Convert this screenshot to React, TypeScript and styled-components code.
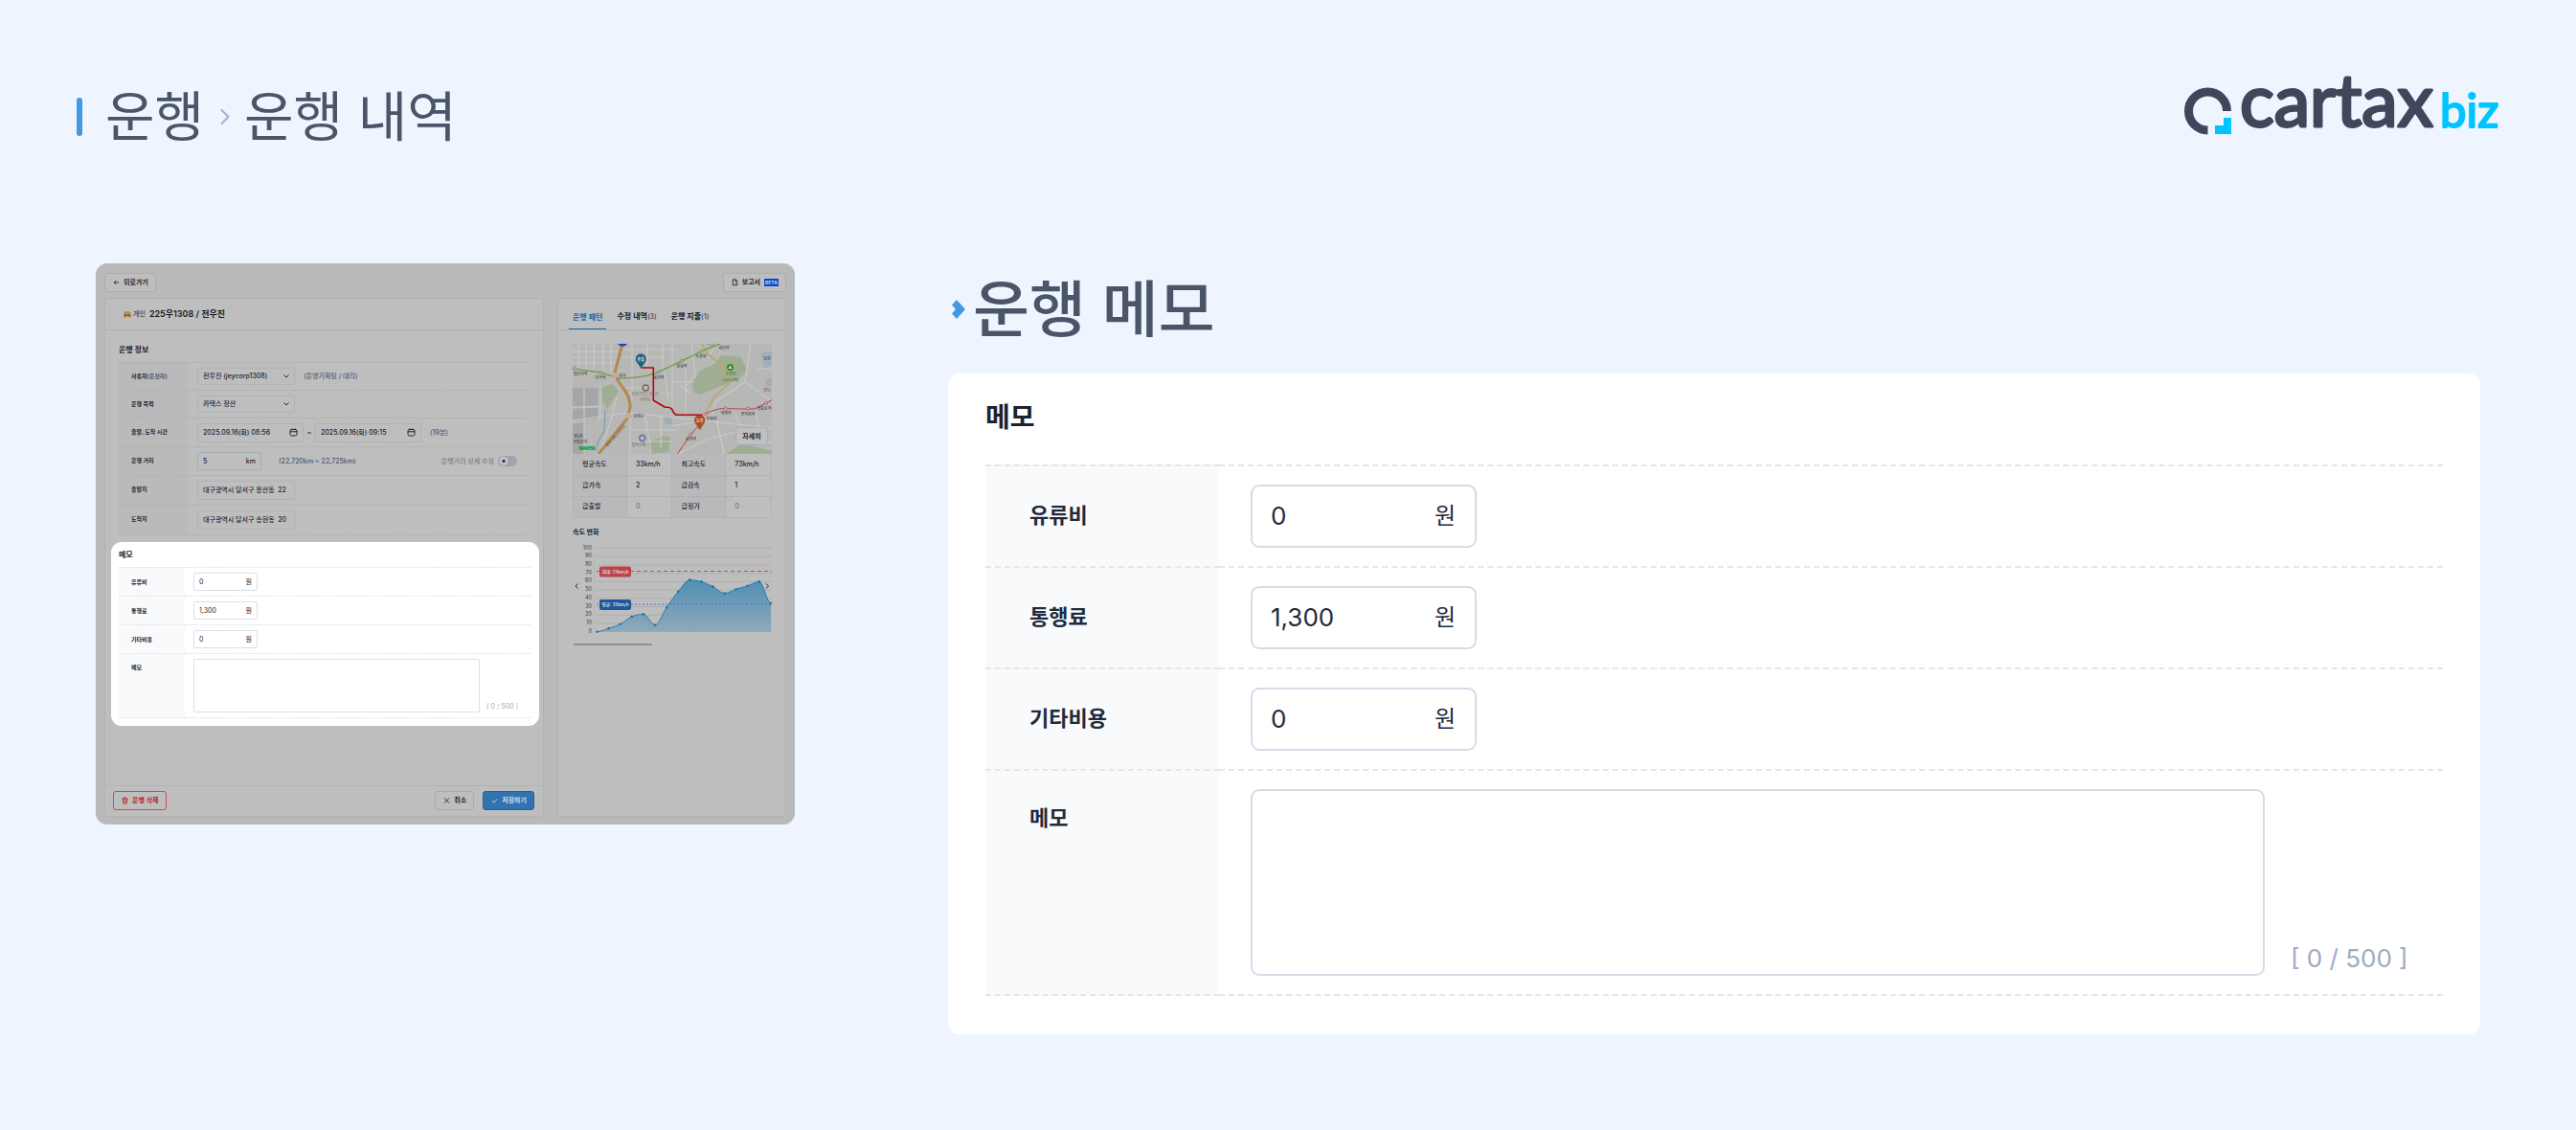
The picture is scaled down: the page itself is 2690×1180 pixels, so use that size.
import React, { useId } from 'react';
import styled, { createGlobalStyle, css } from 'styled-components';

const GlobalStyle = createGlobalStyle`
  *, *::before, *::after { box-sizing: border-box; }
  body {
    margin: 0;
    background: #eef5ff;
    color: #1f2a3d;
    font-family: Inter, "Noto Sans CJK KR", sans-serif;
  }
  button, input, select, textarea { font: inherit; color: inherit; margin: 0; }
`;

/* ---------- page frame ---------- */

const Page = styled.div`
  min-height: 100vh;
`;

const Header = styled.header`
  display: flex;
  align-items: flex-start;
  justify-content: space-between;
  padding: 80px 80px 0;
`;

const Crumbs = styled.h1`
  display: flex;
  align-items: center;
  margin: 0;
  color: #4a5568;
  font-size: 56px;
  font-weight: 400;
  line-height: 84px;
  &::before {
    content: '';
    width: 6px;
    height: 40px;
    margin-right: 24px;
    border-radius: 3px;
    background: #4299e1;
  }
`;

const CrumbArrow = styled.svg`
  width: 12px;
  height: 18px;
  margin: 0 14px 0 16px;
`;

const Logo = styled.svg`
  width: 329px;
  height: 60px;
  overflow: visible;
`;

const Main = styled.main`
  display: grid;
  grid-template-columns: minmax(0, 730fr) minmax(0, 1600fr);
  align-items: start;
  gap: 160px;
  padding: 111px 100px 100px;
`;

/* ---------- memo form: large card and thumbnail ---------- */

type Sized = { $lg?: boolean };

const FeatureTitle = styled.h2`
  display: flex;
  align-items: center;
  gap: 8px;
  margin: 0 0 19px;
  padding-left: 4px;
  color: #4a5568;
  font-size: 64px;
  font-weight: 500;
  line-height: 96px;
`;

const FeatureMark = styled.svg`
  width: 14px;
  height: 20px;
`;

const MemoCard = styled.section<Sized>`
  background: #fff;
  ${p => p.$lg
    ? css`border-radius: 12px; padding: 28px 39px 40px;`
    : css`border-radius: 11px; margin: 7px 4px 0 6px; padding: 5px 9px 8px 8px;`}
`;

const SectionTitle = styled.h3<Sized>`
  margin: 0;
  color: #1a2233;
  font-weight: 700;
  ${p => p.$lg
    ? css`font-size: 28px; line-height: 36px; margin-bottom: 31px;`
    : css`font-size: 8px; line-height: 16px; margin-bottom: 5px;`}
`;

const MemoRows = styled.div<Sized>`
  display: grid;
  grid-template-columns: ${p => (p.$lg ? '244px' : '69px')} minmax(0, 1fr);
`;

const rule = css<Sized>`
  border-bottom: ${p => (p.$lg ? '2px dashed #e6e6e6' : '1px dotted #d9dbde')};
`;

const MemoLabel = styled.label<Sized & { $top?: boolean; $first?: boolean }>`
  ${rule}
  display: flex;
  align-items: ${p => (p.$top ? 'flex-start' : 'center')};
  background: #f9fafc;
  font-weight: 700;
  ${p => p.$first && (p.$lg
    ? css`border-top: 2px dashed #e6e6e6;`
    : css`border-top: 1px dotted #d9dbde;`)}
  ${p => p.$lg
    ? css`font-size: 22px; line-height: 32px; padding: ${p.$top ? '33px' : '0'} 0 2px 46px;`
    : css`font-size: 6px; line-height: 10px; padding: ${p.$top ? '9px' : '0'} 0 0 13px;`}
`;

const MemoCell = styled.div<Sized & { $first?: boolean }>`
  ${rule}
  display: flex;
  align-items: flex-end;
  ${p => p.$first && (p.$lg
    ? css`border-top: 2px dashed #e6e6e6;`
    : css`border-top: 1px dotted #d9dbde;`)}
  ${p => p.$lg ? css`gap: 27px; padding: 19px 33px;` : css`gap: 7px; padding: 5px 9px;`}
`;

const Amount = styled.span<Sized>`
  display: flex;
  align-items: center;
  background: #fff;
  ${p => p.$lg
    ? css`width: 236px; height: 66px; border: 2px solid #d3dce8; border-radius: 9px; padding: 0 20px 0 19px; font-size: 24px; line-height: 32px;`
    : css`width: 67px; height: 19px; border: 1px solid #d8e0ea; border-radius: 2px; padding: 0 5px; font-size: 7px;`}
`;

const AmountInput = styled.input<Sized>`
  flex: 1;
  min-width: 0;
  padding: 0;
  border: 0;
  outline: 0;
  background: none;
  ${p => p.$lg && css`font-size: 26px;`}
`;

const MemoArea = styled.textarea<Sized>`
  flex: 1;
  min-width: 0;
  resize: none;
  outline: 0;
  background: #fff;
  ${p => p.$lg
    ? css`height: 195px; border: 2px solid #d3dce8; border-radius: 9px; padding: 16px 20px; font-size: 24px;`
    : css`height: 56px; border: 1px solid #d8e0ea; border-radius: 2px; padding: 4px 5px; font-size: 7px;`}
`;

const Counter = styled.span<Sized>`
  color: #9dacc0;
  white-space: nowrap;
  ${p => p.$lg
    ? css`width: 126px; font-size: 26px; line-height: 36px;`
    : css`width: 37px; font-size: 7px; line-height: 12px;`}
`;

const COSTS: [string, string][] = [['유류비', '0'], ['통행료', '1,300'], ['기타비용', '0']];

function Memo({ lg }: { lg?: boolean }) {
  const id = useId();
  return (
    <MemoCard $lg={lg}>
      <SectionTitle $lg={lg}>메모</SectionTitle>
      <MemoRows $lg={lg}>
        {COSTS.map(([name, value], i) => (
          <React.Fragment key={name}>
            <MemoLabel $lg={lg} $first={i === 0} htmlFor={id + name}>{name}</MemoLabel>
            <MemoCell $lg={lg} $first={i === 0}>
              <Amount $lg={lg}>
                <AmountInput $lg={lg} id={id + name} defaultValue={value} />
                원
              </Amount>
            </MemoCell>
          </React.Fragment>
        ))}
        <MemoLabel $lg={lg} $top htmlFor={id + 'memo'}>메모</MemoLabel>
        <MemoCell $lg={lg}>
          <MemoArea $lg={lg} id={id + 'memo'} />
          <Counter $lg={lg}>[ 0 / 500 ]</Counter>
        </MemoCell>
      </MemoRows>
    </MemoCard>
  );
}

/* ---------- dimmed app window ---------- */

const Shot = styled.section`
  padding: 10px 9px 8px;
  border-radius: 12px;
  background: #b9b9b9;
  color: #1c2433;
  font-size: 7px;
  line-height: 12px;
`;

const TopBar = styled.div`
  display: flex;
  justify-content: space-between;
  margin-bottom: 6px;
`;

const tones = {
  plain: css`background: #bebebe; border-color: #a6adb8;`,
  danger: css`background: #bebebe; border-color: #c94a4a; color: #b8272b;`,
  primary: css`background: #3173b0; border-color: #27619b; color: #d5dde6;`,
};

const Btn = styled.button<{ $tone?: keyof typeof tones }>`
  display: flex;
  align-items: center;
  gap: 4px;
  height: 20px;
  padding: 0 7px 0 8px;
  border: 1px solid;
  border-radius: 3px;
  font-weight: 600;
  white-space: nowrap;
  ${p => tones[p.$tone ?? 'plain']}
  svg { width: 7px; height: 8px; fill: none; stroke: currentColor; stroke-width: 2; }
`;

const Beta = styled.span`
  padding: 0 1px;
  background: #0a46c4;
  color: #c8d4ee;
  font-size: 5px;
  line-height: 8px;
  font-weight: 700;
`;

const Columns = styled.div`
  display: grid;
  grid-template-columns: minmax(0, 459fr) minmax(0, 239fr);
  gap: 14px;
`;

const Card = styled.div`
  display: flex;
  flex-direction: column;
  border: 1px solid #b1b2b4;
  border-radius: 3px;
  background: #bebebe;
`;

const CardHead = styled.div`
  display: flex;
  align-items: center;
  height: 33px;
  padding-left: 19px;
  border-bottom: 1px solid #b1b2b4;
`;

const CarIcon = styled.svg`
  width: 8px;
  height: 7px;
  margin-right: 2px;
`;

const CarTitle = styled.strong`
  margin-left: 4px;
  color: #141a26;
  font-size: 9px;
  font-weight: 600;
`;

const Info = styled.div`
  padding: 12px 14px 0;
`;

const InfoRows = styled.div`
  border-top: 1px dotted #a9a9a9;
`;

const InfoRow = styled.div<{ $h: number }>`
  display: flex;
  height: ${p => p.$h}px;
  border-bottom: 1px dotted #a9a9a9;
`;

const InfoLabel = styled.label`
  width: 73px;
  padding: 8px 0 0 13px;
  background: #bababb;
  font-size: 6px;
  font-weight: 700;
  white-space: nowrap;
`;

const LabelNote = styled.span`
  color: #45546b;
`;

const InfoCell = styled.div`
  flex: 1;
  min-width: 0;
  display: flex;
  align-items: center;
  padding: 0 13px 0 9px;
`;

const Muted = styled.span<{ $gap?: number }>`
  margin-left: ${p => p.$gap ?? 9}px;
  color: #4d5a70;
  font-weight: 500;
  white-space: nowrap;
`;

const Tilde = styled.span`
  flex: none;
  width: 12px;
  text-align: center;
`;

const Field = styled.span<{ $w: number; $h?: number; $strong?: boolean }>`
  display: flex;
  align-items: center;
  flex: none;
  width: ${p => p.$w}px;
  height: ${p => p.$h ?? 20}px;
  padding: 0 5px;
  border: 1px solid ${p => (p.$strong ? '#a3adba' : '#b0b2b5')};
  border-radius: 2px;
  font-weight: 500;
  svg { flex: none; fill: none; stroke: currentColor; stroke-width: 2; }
`;

const PlainSelect = styled.select`
  appearance: none;
  flex: 1;
  min-width: 0;
  padding: 0;
  border: 0;
  outline: 0;
  background: none;
`;

const SwitchLabel = styled.label`
  display: flex;
  align-items: center;
  gap: 4px;
  margin-left: auto;
  color: #79818d;
  font-weight: 500;
  white-space: nowrap;
`;

const Switch = styled.input`
  appearance: none;
  width: 20px;
  height: 11px;
  margin: 0;
  border-radius: 6px;
  background: radial-gradient(circle at 6px 50%, #1c2433 1px, #c2c2c2 2px, #c2c2c2 4px, transparent 5px) #9ea5b0;
`;

const Footer = styled.div`
  display: flex;
  align-items: center;
  gap: 9px;
  margin-top: 62px;
  padding: 5px 9px 6px 8px;
  border-top: 1px solid #b1b2b4;
`;

const Push = styled.span`
  flex: 1;
`;

const Tabs = styled(CardHead)`
  align-items: stretch;
  gap: 7px;
  padding-left: 11px;
`;

const Tab = styled.button<{ $on?: boolean }>`
  padding: 6px 4px 0;
  border: 0;
  border-bottom: 1px solid ${p => (p.$on ? '#1c63a8' : 'transparent')};
  background: none;
  color: ${p => (p.$on ? '#1c63a8' : '#141a26')};
  font-size: 8px;
  font-weight: 600;
  white-space: nowrap;
  small { color: #4d5a70; font-size: 7px; }
`;

const Pattern = styled.div`
  padding: 14px 14px 0 15px;
`;

const MapBox = styled.div`
  position: relative;
  > svg { display: block; width: 100%; height: auto; border-radius: 2px; }
`;

const MapButton = styled.button`
  position: absolute;
  right: 4px;
  bottom: 9px;
  width: 34px;
  height: 19px;
  padding: 0;
  border: 1px solid #a6adb8;
  border-radius: 3px;
  background: #c0c0c0;
  font-weight: 600;
`;

const Stats = styled.table`
  width: 100%;
  border-collapse: collapse;
  table-layout: fixed;
  th, td {
    height: 22px;
    padding: 0 0 0 9px;
    border: 1px dotted #a9a9a9;
    text-align: left;
    font-weight: 500;
    white-space: nowrap;
  }
  tr:first-child > * { border-top: 0; }
  th { width: 27%; background: #b9b9ba; }
  td { width: 23%; }
`;

const Zero = styled.span`
  color: #6e7a8c;
`;

const ChartTitle = styled.h4`
  margin: 7px 0 0;
  font-size: 7px;
  line-height: 16px;
  font-weight: 700;
`;

const Chart = styled.svg`
  display: block;
  width: 100%;
  height: auto;
`;

const ScrollThumb = styled.div`
  width: 82px;
  height: 2px;
  margin: 4px 0 0 1px;
  border-radius: 1px;
  background: #8d8d8d;
`;

const Chevron = () => (
  <svg width="6" height="6" viewBox="0 0 12 12"><path d="M1 3l5 5 5-5" /></svg>
);

const Calendar = () => (
  <svg width="9" height="9" viewBox="0 0 18 18"><rect x="2" y="3" width="14" height="13" rx="3" /><path d="M2 7.500h14M5.500 1v3M12.500 1v3" /></svg>
);

/* ---------- map ---------- */

const STATIONS: [number, number, string][] = [
  [2, 26, '#4e8f1f'], [29, 30, '#4e8f1f'], [88.7, 30, '#4e8f1f'], [113.7, 18, '#4e8f1f'], [134, 8.3, '#4e8f1f'],
  [138.7, 73.3, '#b83c64'], [159.7, 67.3, '#b83c64'], [183, 67.7, '#b83c64'], [202, 62, '#b83c64'], [123.3, 94.7, '#b5402f'],
];

const PLACES: [number, number, string][] = [
  [8, 33, '업단지역'], [29, 37, '이곡역'], [52, 35, '성서'], [90, 36.5, '용전역'], [114, 25, '감삼역'],
  [134, 15, '두류역'], [158, 6, '내당역'], [160, 74, '대명역'], [183, 74.5, '안지랑역'], [200, 69, '현충로역'],
  [145, 80, '유장역'], [123.5, 101, '송현역'], [69, 77, '남대구'], [203, 17, '남산'], [6, 98, '성2차'], [8, 104, '산업단지'],
];

const STREETS = [
  'M0 8H50M0 14H48M6 0V24M14 0V26M22 0V27M32 0V28M40 0V30M0 20H46',
  'M54 6H110M52 14H96M48 46H84M62 0V60M78 0V24M94 0V28M104 0V66M56 52H104',
  'M0 80L60 72L208 88M96 30L100 60M104 40H126M118 20V74M112 44L124 52',
  'M12 46V115M30 44L28 80M0 66H30M46 56L40 80L28 115M60 76V115M76 76L82 115M92 76V108M60 90H110M64 102H104',
  'M186 0L180 40L208 60M192 26H208M150 0L140 16M124 0L128 34L118 44M180 40L150 60L146 74',
  'M110 115L140 100L170 92L208 104M150 78L158 115M170 74L178 90M190 70L196 88M104 86L126 82',
];

function RouteMap() {
  return (
    <MapBox>
      <svg viewBox="0 0 208 115" fontFamily='"Noto Sans CJK KR", sans-serif' fontSize="4" textAnchor="middle">
        <rect width="208" height="115" fill="#b7b7b5" />
        <path d="M0 46H27L26 64L0 66ZM0 68L27 66L26 78L0 80ZM0 84L12 82V115H0Z" fill="#a5a6a8" />
        <path d="M29 46L42 42L48 50L36 68L31 58ZM78 103L95 96L102 98L100 113L82 115ZM125 41L133 28L150 20L155 12L176 14L182 28L172 38L150 46L134 53L126 50ZM140 0H150L146 4ZM160 115L178 104L208 112V115Z" fill="#9fae93" />
        <path d="M197 10L208 8V22L200 26ZM202 36H208V44H202ZM96 76H104V84H96Z" fill="#a1adb8" />
        <g fill="none">
          {STREETS.map(d => <path key={d} d={d} stroke="#c9c9c9" strokeWidth="1.200" />)}
          <path d="M34 69L33 92Q26 100 24 112" stroke="#7d9db8" strokeWidth="1.300" />
          <path d="M135 0Q138 10 148 16L163 31V42L148 55L138.700 73" stroke="#bba565" strokeWidth="1.600" />
          <path d="M52 0L44 30Q46 38 54 48Q60 56 60 66L57 78L27 115" stroke="#b5894f" strokeWidth="3" />
          <path d="M0 26L29 30L48 36Q70 36 86 31L114 18L134 8L154 0" stroke="#5e9a2e" strokeWidth="1.200" />
          <path d="M138.700 73.300Q150 67 160 67.500T190 68L202 62L208 58.700" stroke="#b83c64" strokeWidth="1" />
          <path d="M132.700 84L123.300 94.700L109.300 115" stroke="#b5402f" strokeWidth="1" />
          <path d="M71.300 25H84.300V59L96 66Q103 66 104 69T108 74.300H135.500" stroke="#b3040d" strokeWidth="1.600" strokeLinejoin="round" />
        </g>
        {STATIONS.map(([x, y, c]) => <circle key={x} cx={x} cy={y} r="1.500" fill="#c6c6c6" stroke={c} strokeWidth=".7" />)}
        <circle cx="44" cy="33" r="3" fill="#bcaea2" />
        <circle cx="58" cy="75" r="3" fill="#bcaea2" />
        <path d="M47 0H57Q55 3 52 3T47 0" fill="#2149b5" />
        <g fill="#262626">
          {PLACES.map(([x, y, t]) => <text key={t} x={x} y={y}>{t}</text>)}
        </g>
        <text x="76" y="54" fill="#7a6552">감삼우방드림시티</text>
        <text x="76" y="60" fill="#7a6552">아파트</text>
        <circle cx="76.300" cy="46" r="3" fill="none" stroke="#7a6552" strokeWidth="1.400" />
        <circle cx="72.700" cy="98.500" r="3" fill="none" stroke="#5f6ea8" strokeWidth="1.400" />
        <text x="69" y="107" fill="#4d5675">달서구청</text>
        <circle cx="164.500" cy="24.500" r="3.500" fill="#3b8a2e" />
        <path d="M162.500 26L164.500 22.500L166.500 26Z" fill="#cfd8cc" />
        <text x="165" y="33" fill="#2c6b25">두류산</text>
        <text x="165" y="38.500" fill="#2c6b25">(125.5m)</text>
        <text x="203" y="49.500" fill="#b5304a">영남</text>
        <text x="46" y="97" fill="#6b4a1c" transform="rotate(-49 46 97)">중부내륙고속지선</text>
        <text x="15" y="111" fill="#049a35" fontWeight="900" fontFamily="Inter, sans-serif" fontSize="4.600">NAVER</text>
        <path d="M71.300 25.500L67 19.500A5.600 5.600 0 1 1 75.600 19.500Z" fill="#1c6580" />
        <text x="71.300" y="17.500" fill="#cfd8dc" fontWeight="700">출발</text>
        <path d="M132.700 90L128.400 83.500A5.600 5.600 0 1 1 137 83.500Z" fill="#b34a22" />
        <text x="132.700" y="81.500" fill="#e0cdc4" fontWeight="700">도착</text>
      </svg>
      <MapButton type="button">자세히</MapButton>
    </MapBox>
  );
}

/* ---------- speed chart ---------- */

const SPEEDS = [0, 4, 9, 18, 21, 8, 29, 48, 62, 60, 54, 46, 51, 55, 60, 34];
const px = (i: number) => 25.5 + i * 12.1;
const py = (v: number) => 95.7 - v * 0.872;

function smoothLine(values: number[]) {
  const pts = values.map((v, i) => [px(i), py(v)]);
  const slope = pts.map((p, i) => {
    const a = pts[i - 1];
    const b = pts[i + 1];
    if (!a || !b) return 0;
    const before = p[1] - a[1];
    const after = b[1] - p[1];
    return before * after <= 0 ? 0 : (before + after) / 2;
  });
  return pts.slice(1).reduce((d, p, i) => {
    const o = pts[i];
    const third = (p[0] - o[0]) / 3;
    return `${d}C${o[0] + third} ${o[1] + slope[i] / 3} ${p[0] - third} ${p[1] - slope[i + 1] / 3} ${p[0]} ${p[1]}`;
  }, `M${pts[0][0]} ${pts[0][1]}`);
}

function SpeedChart() {
  const line = smoothLine(SPEEDS);
  return (
    <Chart viewBox="0 0 208 104" fontFamily='Inter, "Noto Sans CJK KR", sans-serif' fontSize="5.500">
      <defs>
        <linearGradient id="speedFill" x1="0" y1="0" x2="0" y2="1">
          <stop offset="0" stopColor="#528fb5" />
          <stop offset="1" stopColor="#8ea9ba" />
        </linearGradient>
      </defs>
      {Array.from({ length: 11 }, (_, i) => (
        <g key={i}>
          <path d={`M25 ${py(i * 10)}H208`} stroke="#a9a9ab" strokeWidth=".7" />
          <text x="20" y={py(i * 10) + 1} textAnchor="end" fill="#3a3a3d">{i * 10}</text>
        </g>
      ))}
      <path d="M22.500 8V96" stroke="#b2b2b4" strokeWidth=".7" />
      <path d={`${line}V95.700H25.500Z`} fill="url(#speedFill)" />
      <path d={line} fill="none" stroke="#1877ab" strokeWidth=".9" />
      {SPEEDS.map((v, i) => <circle key={i} cx={px(i)} cy={py(v)} r="1.300" fill="#1877ab" />)}
      <path d="M25 32.500H208" stroke="#c23d45" strokeWidth=".9" strokeDasharray="4 3" />
      <path d="M25 67H208" stroke="#3f72ab" strokeWidth=".9" strokeDasharray="2 2" />
      <rect x="28" y="27.500" width="33" height="11" rx="2" fill="#bd4348" />
      <rect x="28" y="62" width="33" height="11" rx="2" fill="#1b589c" />
      <g fill="#dcd3d6" fontSize="4.500" fontWeight="700" textAnchor="middle">
        <text x="44.500" y="34.500">최대: 73km/h</text>
        <text x="44.500" y="69">평균: 33km/h</text>
      </g>
      <path d="M5.500 45.500L3 48L5.500 50.500M202 45.500L204.500 48L202 50.500" fill="none" stroke="#2a2a2c" />
    </Chart>
  );
}

function AppWindow() {
  return (
    <Shot>
      <TopBar>
        <Btn type="button">
          <svg viewBox="0 0 16 16"><path d="M14 8H3M7 3.500L2.500 8L7 12.500" /></svg>
          뒤로가기
        </Btn>
        <Btn type="button">
          <svg viewBox="0 0 16 16"><path d="M7 15H3V1h7l3 3v3M9 1v4h4M8 13l5-4 2 3-3 3z" /></svg>
          보고서
          <Beta>BETA</Beta>
        </Btn>
      </TopBar>
      <Columns>
        <Card>
          <CardHead>
            <CarIcon viewBox="0 0 16 14"><path d="M3 1h10l2 5v7h-3v-2H4v2H1V6z" fill="#a8691a" /><path d="M4 3h8l1 3H3z" fill="#c4a57c" /><path d="M3 8h2M11 8h2" stroke="#5d3a0e" strokeWidth="2" /></CarIcon>
            개인
            <CarTitle>225우1308 / 전우진</CarTitle>
          </CardHead>
          <Info>
            <SectionTitle>운행 정보</SectionTitle>
            <InfoRows>
              <InfoRow $h={29}>
                <InfoLabel htmlFor="driver">사용자<LabelNote>(운전자)</LabelNote></InfoLabel>
                <InfoCell>
                  <Field $w={102} $h={18}>
                    <PlainSelect id="driver"><option>전우진 (jeycorp1308)</option></PlainSelect>
                    <Chevron />
                  </Field>
                  <Muted>(운영기획팀 / 대리)</Muted>
                </InfoCell>
              </InfoRow>
              <InfoRow $h={29}>
                <InfoLabel htmlFor="purpose">운행 목적</InfoLabel>
                <InfoCell>
                  <Field $w={102} $h={18}>
                    <PlainSelect id="purpose"><option>카택스 정산</option></PlainSelect>
                    <Chevron />
                  </Field>
                </InfoCell>
              </InfoRow>
              <InfoRow $h={30}>
                <InfoLabel htmlFor="depart">출발, 도착 시간</InfoLabel>
                <InfoCell>
                  <Field $w={111}><AmountInput id="depart" defaultValue="2025.09.16(화) 08:56" /><Calendar /></Field>
                  <Tilde>~</Tilde>
                  <Field $w={111}><AmountInput aria-label="도착 시간" defaultValue="2025.09.16(화) 09:15" /><Calendar /></Field>
                  <Muted>(19분)</Muted>
                </InfoCell>
              </InfoRow>
              <InfoRow $h={30}>
                <InfoLabel htmlFor="distance">운행 거리</InfoLabel>
                <InfoCell>
                  <Field $w={67} $h={19} $strong><AmountInput id="distance" defaultValue="5" />km</Field>
                  <Muted $gap={18}>(22,720km ~ 22,725km)</Muted>
                  <SwitchLabel>운행거리 상세 수정<Switch type="checkbox" /></SwitchLabel>
                </InfoCell>
              </InfoRow>
              <InfoRow $h={31}>
                <InfoLabel htmlFor="from">출발지</InfoLabel>
                <InfoCell><Field $w={102}><AmountInput id="from" defaultValue="대구광역시 달서구 용산동  22" /></Field></InfoCell>
              </InfoRow>
              <InfoRow $h={31}>
                <InfoLabel htmlFor="to">도착지</InfoLabel>
                <InfoCell><Field $w={102}><AmountInput id="to" defaultValue="대구광역시 달서구 송현동  20" /></Field></InfoCell>
              </InfoRow>
            </InfoRows>
          </Info>
          <Memo />
          <Footer>
            <Btn type="button" $tone="danger">
              <svg viewBox="0 0 16 16"><path d="M1 4h14M5 4V1h6v3M3 4l1 11h8l1-11M6.500 7v5M9.500 7v5" /></svg>
              운행 삭제
            </Btn>
            <Push />
            <Btn type="button">
              <svg viewBox="0 0 16 16"><path d="M2 2l12 12M14 2L2 14" /></svg>
              취소
            </Btn>
            <Btn type="button" $tone="primary">
              <svg viewBox="0 0 16 16"><path d="M2 8l4 5 8-9" /></svg>
              저장하기
            </Btn>
          </Footer>
        </Card>
        <Card>
          <Tabs>
            <Tab type="button" $on>운행 패턴</Tab>
            <Tab type="button">수정 내역<small>(3)</small></Tab>
            <Tab type="button">운행 지출<small>(1)</small></Tab>
          </Tabs>
          <Pattern>
            <RouteMap />
            <Stats>
              <tbody>
                <tr><th scope="row">평균속도</th><td>33km/h</td><th scope="row">최고속도</th><td>73km/h</td></tr>
                <tr><th scope="row">급가속</th><td>2</td><th scope="row">급감속</th><td>1</td></tr>
                <tr><th scope="row">급출발</th><td><Zero>0</Zero></td><th scope="row">급정거</th><td><Zero>0</Zero></td></tr>
              </tbody>
            </Stats>
            <ChartTitle>속도 변화</ChartTitle>
            <SpeedChart />
            <ScrollThumb />
          </Pattern>
        </Card>
      </Columns>
    </Shot>
  );
}

export default function App() {
  return (
    <Page>
      <GlobalStyle />
      <Header>
        <Crumbs>
          운행
          <CrumbArrow viewBox="0 0 12 18"><path d="M2 1.500L9.500 9L2 16.500" fill="none" stroke="#a0b2cb" strokeWidth="2" /></CrumbArrow>
          운행 내역
        </Crumbs>
        <Logo viewBox="0 0 329 60" fontFamily="Lato, sans-serif" strokeLinejoin="round" strokeLinecap="round">
          <path d="M24.500 56A20 20 0 1 1 44.500 36" fill="none" stroke="#42465b" strokeWidth="9" strokeLinecap="butt" />
          <path d="M41 43h8v17H32v-9h9z" fill="#00c4ff" />
          <text x="58" y="52" fontSize="75" fill="#42465b" stroke="#42465b" strokeWidth="3">cartax</text>
          <text x="267" y="53" fontSize="49" fill="#00c4ff" stroke="#00c4ff" strokeWidth="2">biz</text>
        </Logo>
      </Header>
      <Main>
        <AppWindow />
        <div>
          <FeatureTitle>
            <FeatureMark viewBox="0 0 14 20"><path d="M5 0L14 10L5 20L0 14.500L4 10L0 5.500Z" fill="#4299e1" /></FeatureMark>
            운행 메모
          </FeatureTitle>
          <Memo lg />
        </div>
      </Main>
    </Page>
  );
}
